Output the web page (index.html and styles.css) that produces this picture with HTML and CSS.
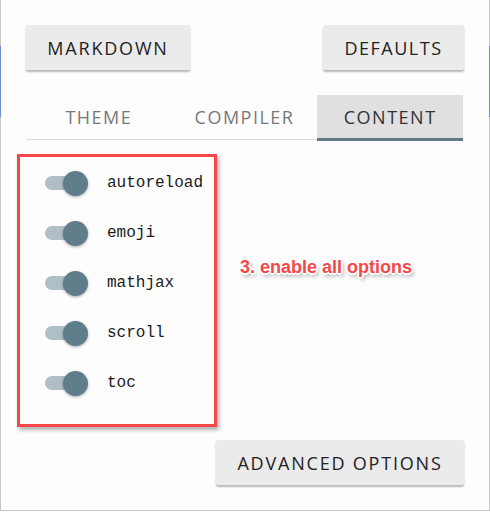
FILE: index.html
```html
<!DOCTYPE html>
<html>
<head>
<meta charset="utf-8">
<link rel="stylesheet" href="styles.css">
</head>
<body>
<div class="panel">
  <div class="top-row">
    <button class="btn">MARKDOWN</button>
    <button class="btn">DEFAULTS</button>
  </div>
  <div class="tabs">
    <div class="tab">THEME</div>
    <div class="tab">COMPILER</div>
    <div class="tab active">CONTENT</div>
  </div>
  <div class="content-row">
    <div class="annot-box">
      <div class="opt"><span class="toggle"><span class="thumb"></span></span><span class="label">autoreload</span></div>
      <div class="opt"><span class="toggle"><span class="thumb"></span></span><span class="label">emoji</span></div>
      <div class="opt"><span class="toggle"><span class="thumb"></span></span><span class="label">mathjax</span></div>
      <div class="opt"><span class="toggle"><span class="thumb"></span></span><span class="label">scroll</span></div>
      <div class="opt"><span class="toggle"><span class="thumb"></span></span><span class="label">toc</span></div>
    </div>
    <div class="annot-text">3. enable all options</div>
  </div>
  <div class="bottom-row">
    <button class="btn">ADVANCED OPTIONS</button>
  </div>
</div>
</body>
</html>
```

FILE: styles.css
```css
html, body {
  margin: 0;
  padding: 0;
  background: #ffffff;
}
.panel {
  position: relative;
  box-sizing: border-box;
  width: 490px;
  height: 511px;
  background: #fdfdfd;
  border-left: 1px solid #c8c8c8;
  border-right: 1px solid #c8c8c8;
  border-bottom: 1px solid #c8c8c8;
  padding: 25px 25px 0 25px;
  font-family: "Open Sans", "Noto Sans", sans-serif;
}
.panel::before, .panel::after {
  content: "";
  position: absolute;
  top: 46px;
  width: 1px;
  height: 71px;
  background: #6e8fc8;
}
.panel::before { left: -1px; }
.panel::after { right: -1px; }
.top-row {
  display: flex;
  justify-content: space-between;
}
.btn {
  height: 45px;
  border: none;
  border-radius: 2px;
  background: #ebebeb;
  box-shadow: 0 2px 2px rgba(0, 0, 0, 0.28);
  font-family: "Open Sans", "Noto Sans", sans-serif;
  font-size: 18px;
  letter-spacing: 1.8px;
  color: #222;
  padding: 0;
  cursor: pointer;
}
.top-row .btn:first-child { width: 164px; }
.top-row .btn:last-child { width: 141px; letter-spacing: 1.5px; }
.tabs {
  margin-top: 25px;
  width: 437px;
  display: grid;
  grid-template-columns: 1fr 1fr 1fr;
  border-bottom: 1px solid #dcdcdc;
  height: 44px;
}
.tab {
  position: relative;
  height: 43px;
  display: flex;
  align-items: center;
  justify-content: center;
  font-size: 18px;
  letter-spacing: 1.5px;
  color: #787878;
}
.tab.active {
  background: #e0e0e0;
  color: #333;
}
.tab.active::after {
  content: "";
  position: absolute;
  left: 0;
  right: 0;
  bottom: -3px;
  height: 3px;
  background: #5f7b88;
}
.content-row {
  display: flex;
  align-items: flex-start;
  margin-top: 14px;
  margin-left: -9px;
}
.annot-box {
  box-sizing: border-box;
  width: 200px;
  height: 273px;
  border: 3px solid #f54848;
  box-shadow: 2px 3px 4px rgba(0, 0, 0, 0.3);
  padding: 1px 0 0 25px;
}
.opt {
  height: 50px;
  display: flex;
  align-items: center;
}
.toggle {
  position: relative;
  width: 36px;
  height: 14px;
  border-radius: 7px;
  background: #b0bec5;
}
.thumb {
  position: absolute;
  right: -7px;
  top: -5px;
  width: 25px;
  height: 25px;
  border-radius: 50%;
  background: #607d8b;
  box-shadow: 0 1px 3px rgba(0, 0, 0, 0.35);
}
.label {
  margin-left: 26px;
  font-family: "Liberation Mono", monospace;
  font-size: 16px;
  color: #1a1a1a;
}
.annot-text {
  margin-left: 23px;
  margin-top: 103px;
  font-family: "Liberation Sans", Arial, sans-serif;
  font-weight: bold;
  font-size: 18px;
  color: #f44848;
  text-shadow: -1px -1px 0 #fff, 1px -1px 0 #fff, -1px 1px 0 #fff, 1px 1px 0 #fff,
    0 -2px 0 #fff, 0 2px 0 #fff, -2px 0 0 #fff, 2px 0 0 #fff,
    2px 3px 4px rgba(0, 0, 0, 0.45);
}
.bottom-row {
  margin-top: 13px;
  display: flex;
  justify-content: flex-end;
  width: 438px;
}
.bottom-row .btn { width: 248px; }
```
